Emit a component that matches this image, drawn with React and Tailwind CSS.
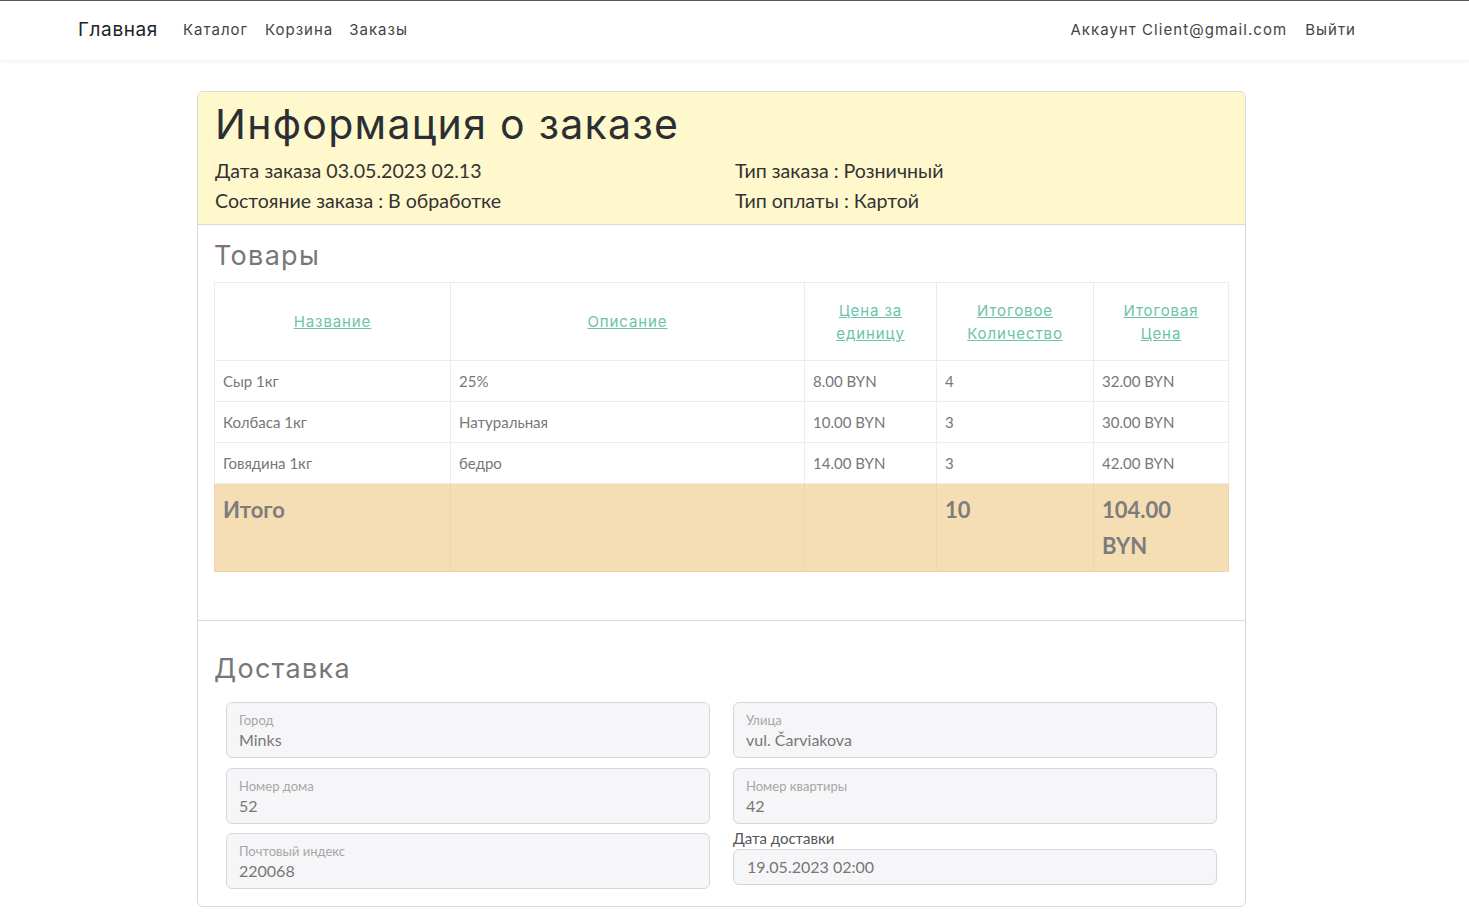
const heading = { fontFamily: "Inter, 'DejaVu Sans', sans-serif" };

const rows = [
  { name: "Сыр 1кг", desc: "25%", price: "8.00 BYN", qty: "4", total: "32.00 BYN" },
  { name: "Колбаса 1кг", desc: "Натуральная", price: "10.00 BYN", qty: "3", total: "30.00 BYN" },
  { name: "Говядина 1кг", desc: "бедро", price: "14.00 BYN", qty: "3", total: "42.00 BYN" },
];

function Field({ label, value }) {
  return (
    <div className="h-[56px] rounded-md border border-[#d3d6da] bg-[#f6f6f8] px-3 pt-[8px]">
      <div className="text-[13px] leading-[18px] text-[#a6a6a6]">{label}</div>
      <div className="text-[16px] leading-[21px] text-[#777]">{value}</div>
    </div>
  );
}

export default function App() {
  return (
    <div className="min-h-screen bg-white font-['Lato',sans-serif] text-[#333]">
      {/* NAVBAR */}
      <nav className="flex h-[60px] items-center justify-between border-t border-[#555] pl-[78px] pr-[113px] shadow-[0_2px_4px_rgba(0,0,0,0.05)]" style={heading}>
        <div className="flex items-center">
          <a className="mr-[25px] text-[19px] tracking-[0.6px] text-[#222]">Главная</a>
          <a className="mr-[17px] text-[15px] tracking-[1px] text-[#444]">Каталог</a>
          <a className="mr-[16px] text-[15px] tracking-[1px] text-[#444]">Корзина</a>
          <a className="text-[15px] tracking-[1px] text-[#444]">Заказы</a>
        </div>
        <div className="flex items-center">
          <a className="mr-[18px] text-[15px] tracking-[1.05px] text-[#444]">Аккаунт Client@gmail.com</a>
          <a className="text-[15px] tracking-[1px] text-[#444]">Выйти</a>
        </div>
      </nav>

      {/* CARD */}
      <div className="ml-[197px] mt-[31px] w-[1049px] overflow-hidden rounded-md border border-[#d9d9d9]">
        {/* HEADER */}
        <div className="h-[133px] border-b border-[#d9d9d9] bg-[#fff8cd] px-[17px] pt-[6px]">
          <h1 className="text-[41px] leading-[52px] tracking-[1.3px] text-[#2b2f33]" style={heading}>Информация о заказе</h1>
          <div className="mt-[6px] grid grid-cols-[520px_1fr] text-[19.6px] leading-[30px] text-[#333]">
            <div>Дата заказа 03.05.2023 02.13</div>
            <div>Тип заказа : Розничный</div>
            <div>Состояние заказа : В обработке</div>
            <div>Тип оплаты : Картой</div>
          </div>
        </div>

        {/* GOODS */}
        <div className="border-b border-[#dcdcdc] px-[16px] pb-[48px] pt-[13px]">
          <h2 className="mb-[8px] text-[27px] leading-[36px] tracking-[1.3px] text-[#777]" style={heading}>Товары</h2>
          <table className="w-full border-collapse text-[15px] text-[#777]">
            <thead>
              <tr className="h-[78px] text-center text-[15px] leading-[23px] tracking-[0.9px]" style={heading}>
                <th className="w-[236px] border border-[#ececec] font-normal"><a className="text-[#6cc3a6] underline">Название</a></th>
                <th className="w-[354px] border border-[#ececec] font-normal"><a className="text-[#6cc3a6] underline">Описание</a></th>
                <th className="w-[132px] border border-[#ececec] px-[8px] font-normal"><a className="text-[#6cc3a6] underline">Цена за единицу</a></th>
                <th className="w-[157px] border border-[#ececec] px-[8px] font-normal"><a className="text-[#6cc3a6] underline">Итоговое Количество</a></th>
                <th className="border border-[#ececec] px-[12px] font-normal"><a className="text-[#6cc3a6] underline">Итоговая Цена</a></th>
              </tr>
            </thead>
            <tbody>
              {rows.map((r) => (
                <tr key={r.name} className="h-[41px]">
                  <td className="border border-[#ececec] px-[8px]">{r.name}</td>
                  <td className="border border-[#ececec] px-[8px]">{r.desc}</td>
                  <td className="border border-[#ececec] px-[8px]">{r.price}</td>
                  <td className="border border-[#ececec] px-[8px]">{r.qty}</td>
                  <td className="border border-[#ececec] px-[8px]">{r.total}</td>
                </tr>
              ))}
              <tr className="h-[88px] bg-[#f5deb4] align-top text-[22px] font-bold leading-[36px] text-[#7d7d7d]">
                <td className="border border-[#ecd6ad] px-[8px] pt-[8px]">Итого</td>
                <td className="border border-[#ecd6ad]"></td>
                <td className="border border-[#ecd6ad]"></td>
                <td className="border border-[#ecd6ad] px-[8px] pt-[8px]">10</td>
                <td className="border border-[#ecd6ad] px-[8px] pt-[8px]">104.00 BYN</td>
              </tr>
            </tbody>
          </table>
        </div>

        {/* DELIVERY */}
        <div className="px-[16px] pb-[17px] pt-[30px]">
          <h2 className="mb-[15px] text-[27px] leading-[36px] tracking-[1.3px] text-[#777]" style={heading}>Доставка</h2>
          <div className="grid grid-cols-2 gap-x-[23px] px-[12px]">
            <div className="flex flex-col gap-[9.5px]">
              <Field label="Город" value="Minks" />
              <Field label="Номер дома" value="52" />
              <Field label="Почтовый индекс" value="220068" />
            </div>
            <div className="flex flex-col gap-[9.5px]">
              <Field label="Улица" value="vul. Čarviakova" />
              <Field label="Номер квартиры" value="42" />
              <div className="-mt-[6px]">
                <div className="text-[15px] leading-[22px] text-[#555]">Дата доставки</div>
                <div className="flex h-[36px] items-center rounded-md border border-[#d3d6da] bg-[#f6f6f8] px-[13px] text-[16px] text-[#777]">
                  19.05.2023 02:00
                </div>
              </div>
            </div>
          </div>
        </div>
      </div>
    </div>
  );
}
